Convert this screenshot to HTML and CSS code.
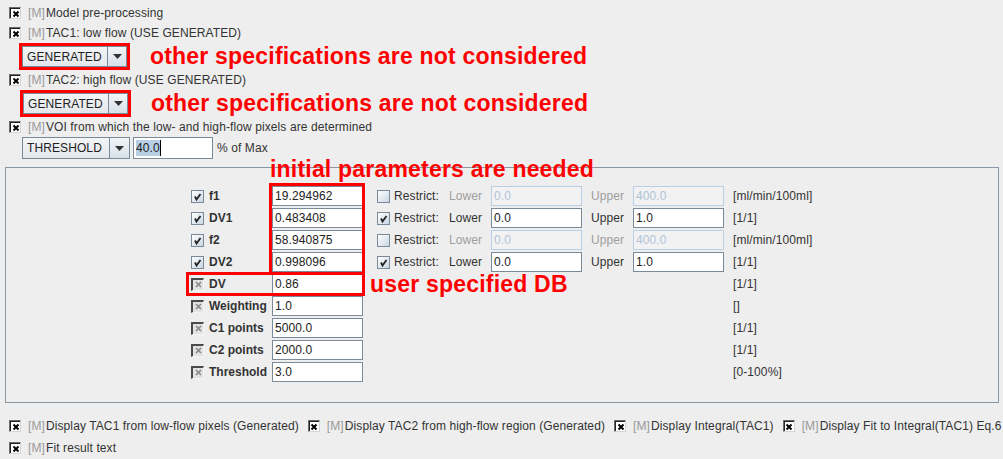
FILE: index.html
```html
<!DOCTYPE html>
<html>
<head>
<meta charset="utf-8">
<link rel="stylesheet" href="styles.css">
</head>
<body>
<div class="page">
  <div class="top">
    <div class="opt r1"><span class="cbx"><svg width="8" height="8" viewBox="0 0 8 8"><path d="M1.5 1.5L6.5 6.5M6.5 1.5L1.5 6.5" stroke="#000" stroke-width="2"/></svg></span><span class="m">[M]</span><span>Model pre-processing</span></div>
    <div class="opt"><span class="cbx"><svg width="8" height="8" viewBox="0 0 8 8"><path d="M1.5 1.5L6.5 6.5M6.5 1.5L1.5 6.5" stroke="#000" stroke-width="2"/></svg></span><span class="m">[M]</span><span>TAC1: low flow (USE GENERATED)</span></div>
    <div class="combo-row c1">
      <div class="redbox"><div class="combo"><span class="combo-text">GENERATED</span><span class="combo-btn"><svg width="9" height="5" viewBox="0 0 9 5"><path d="M0 0H9L4.5 5Z" fill="#333"/></svg></span></div></div>
      <span class="note">other specifications are not considered</span>
    </div>
    <div class="opt"><span class="cbx"><svg width="8" height="8" viewBox="0 0 8 8"><path d="M1.5 1.5L6.5 6.5M6.5 1.5L1.5 6.5" stroke="#000" stroke-width="2"/></svg></span><span class="m">[M]</span><span>TAC2: high flow (USE GENERATED)</span></div>
    <div class="combo-row c2">
      <div class="redbox"><div class="combo"><span class="combo-text">GENERATED</span><span class="combo-btn"><svg width="9" height="5" viewBox="0 0 9 5"><path d="M0 0H9L4.5 5Z" fill="#333"/></svg></span></div></div>
      <span class="note">other specifications are not considered</span>
    </div>
    <div class="opt"><span class="cbx"><svg width="8" height="8" viewBox="0 0 8 8"><path d="M1.5 1.5L6.5 6.5M6.5 1.5L1.5 6.5" stroke="#000" stroke-width="2"/></svg></span><span class="m">[M]</span><span>VOI from which the low- and high-flow pixels are determined</span></div>
    <div class="thr-row">
      <div class="combo wide"><span class="combo-text">THRESHOLD</span><span class="combo-btn"><svg width="9" height="5" viewBox="0 0 9 5"><path d="M0 0H9L4.5 5Z" fill="#333"/></svg></span></div>
      <div class="tfield"><span class="hl">40.0</span><span class="caret"></span></div>
      <span class="pct">% of Max</span>
    </div>
  </div>

  <div class="panel">
    <div class="prow">
      <span class="cbm"><svg width="11" height="11" viewBox="0 0 11 11"><path d="M3 5.5L4.5 8.5L8.5 3" stroke="#222" stroke-width="1.8" fill="none"/></svg></span>
      <span class="plabel">f1</span>
      <span class="fld">19.294962</span>
      <span class="cbm rcb"></span>
      <span class="rl">Restrict:</span>
      <span class="lw dis">Lower</span>
      <span class="fld dis lo">0.0</span>
      <span class="up dis">Upper</span>
      <span class="fld dis hi">400.0</span>
      <span class="unit">[ml/min/100ml]</span>
    </div>
    <div class="prow">
      <span class="cbm"><svg width="11" height="11" viewBox="0 0 11 11"><path d="M3 5.5L4.5 8.5L8.5 3" stroke="#222" stroke-width="1.8" fill="none"/></svg></span>
      <span class="plabel">DV1</span>
      <span class="fld">0.483408</span>
      <span class="cbm rcb"><svg width="11" height="11" viewBox="0 0 11 11"><path d="M3 5.5L4.5 8.5L8.5 3" stroke="#222" stroke-width="1.8" fill="none"/></svg></span>
      <span class="rl">Restrict:</span>
      <span class="lw">Lower</span>
      <span class="fld lo">0.0</span>
      <span class="up">Upper</span>
      <span class="fld hi">1.0</span>
      <span class="unit">[1/1]</span>
    </div>
    <div class="prow">
      <span class="cbm"><svg width="11" height="11" viewBox="0 0 11 11"><path d="M3 5.5L4.5 8.5L8.5 3" stroke="#222" stroke-width="1.8" fill="none"/></svg></span>
      <span class="plabel">f2</span>
      <span class="fld">58.940875</span>
      <span class="cbm rcb"></span>
      <span class="rl">Restrict:</span>
      <span class="lw dis">Lower</span>
      <span class="fld dis lo">0.0</span>
      <span class="up dis">Upper</span>
      <span class="fld dis hi">400.0</span>
      <span class="unit">[ml/min/100ml]</span>
    </div>
    <div class="prow">
      <span class="cbm"><svg width="11" height="11" viewBox="0 0 11 11"><path d="M3 5.5L4.5 8.5L8.5 3" stroke="#222" stroke-width="1.8" fill="none"/></svg></span>
      <span class="plabel">DV2</span>
      <span class="fld">0.998096</span>
      <span class="cbm rcb"><svg width="11" height="11" viewBox="0 0 11 11"><path d="M3 5.5L4.5 8.5L8.5 3" stroke="#222" stroke-width="1.8" fill="none"/></svg></span>
      <span class="rl">Restrict:</span>
      <span class="lw">Lower</span>
      <span class="fld lo">0.0</span>
      <span class="up">Upper</span>
      <span class="fld hi">1.0</span>
      <span class="unit">[1/1]</span>
    </div>
    <div class="prow">
      <span class="cbd"><svg width="7" height="7" viewBox="0 0 7 7"><path d="M1 1L6 6M6 1L1 6" stroke="#888" stroke-width="1.6"/></svg></span>
      <span class="plabel">DV</span>
      <span class="fld">0.86</span>
      <span class="unit">[1/1]</span>
    </div>
    <div class="prow">
      <span class="cbd"><svg width="7" height="7" viewBox="0 0 7 7"><path d="M1 1L6 6M6 1L1 6" stroke="#888" stroke-width="1.6"/></svg></span>
      <span class="plabel">Weighting</span>
      <span class="fld">1.0</span>
      <span class="unit">[]</span>
    </div>
    <div class="prow">
      <span class="cbd"><svg width="7" height="7" viewBox="0 0 7 7"><path d="M1 1L6 6M6 1L1 6" stroke="#888" stroke-width="1.6"/></svg></span>
      <span class="plabel">C1 points</span>
      <span class="fld">5000.0</span>
      <span class="unit">[1/1]</span>
    </div>
    <div class="prow">
      <span class="cbd"><svg width="7" height="7" viewBox="0 0 7 7"><path d="M1 1L6 6M6 1L1 6" stroke="#888" stroke-width="1.6"/></svg></span>
      <span class="plabel">C2 points</span>
      <span class="fld">2000.0</span>
      <span class="unit">[1/1]</span>
    </div>
    <div class="prow">
      <span class="cbd"><svg width="7" height="7" viewBox="0 0 7 7"><path d="M1 1L6 6M6 1L1 6" stroke="#888" stroke-width="1.6"/></svg></span>
      <span class="plabel">Threshold</span>
      <span class="fld">3.0</span>
      <span class="unit">[0-100%]</span>
    </div>
  </div>

  <div class="bottom">
    <div class="brow">
      <div class="opt"><span class="cbx"><svg width="8" height="8" viewBox="0 0 8 8"><path d="M1.5 1.5L6.5 6.5M6.5 1.5L1.5 6.5" stroke="#000" stroke-width="2"/></svg></span><span class="m">[M]</span><span>Display TAC1 from low-flow pixels (Generated)</span></div>
      <div class="opt"><span class="cbx"><svg width="8" height="8" viewBox="0 0 8 8"><path d="M1.5 1.5L6.5 6.5M6.5 1.5L1.5 6.5" stroke="#000" stroke-width="2"/></svg></span><span class="m">[M]</span><span>Display TAC2 from high-flow region (Generated)</span></div>
      <div class="opt"><span class="cbx"><svg width="8" height="8" viewBox="0 0 8 8"><path d="M1.5 1.5L6.5 6.5M6.5 1.5L1.5 6.5" stroke="#000" stroke-width="2"/></svg></span><span class="m">[M]</span><span>Display Integral(TAC1)</span></div>
      <div class="opt"><span class="cbx"><svg width="8" height="8" viewBox="0 0 8 8"><path d="M1.5 1.5L6.5 6.5M6.5 1.5L1.5 6.5" stroke="#000" stroke-width="2"/></svg></span><span class="m">[M]</span><span>Display Fit to Integral(TAC1) Eq.6</span></div>
    </div>
    <div class="brow">
      <div class="opt"><span class="cbx"><svg width="8" height="8" viewBox="0 0 8 8"><path d="M1.5 1.5L6.5 6.5M6.5 1.5L1.5 6.5" stroke="#000" stroke-width="2"/></svg></span><span class="m">[M]</span><span>Fit result text</span></div>
    </div>
  </div>

  <div class="rbox rb1"></div>
  <div class="rbox rb2"></div>
  <div class="note abs n-init">initial parameters are needed</div>
  <div class="note abs n-user">user specified DB</div>
</div>
</body>
</html>
```

FILE: styles.css
```css
html, body {
  margin: 0;
  padding: 0;
}
body {
  background: #eeeeee;
  font-family: "Liberation Sans", Arial, sans-serif;
  font-size: 12px;
  letter-spacing: 0.1px;
  color: #333333;
}
.page {
  position: relative;
  width: 1003px;
  height: 459px;
  overflow: hidden;
}
.top {
  padding-left: 9px;
  padding-top: 3px;
}
.opt {
  display: flex;
  align-items: center;
  height: 20px;
  white-space: nowrap;
}
.cbx {
  flex: none;
  width: 12px;
  height: 12px;
  box-sizing: border-box;
  border: 1px solid;
  border-color: #6a6a6a #d4d4d4 #d4d4d4 #6a6a6a;
  box-shadow: inset 1px 1px 0 #222;
  background: #ffffff;
  display: flex;
  align-items: center;
  justify-content: center;
  margin-right: 7px;
}
.cbx svg {
  margin: 1px 0 0 1px;
}
.m {
  color: #9a9a9a;
  margin-right: 1px;
}
.combo-row {
  display: flex;
  align-items: center;
  height: 27px;
}
.combo-row.c1 {
  margin-left: 10px;
}
.combo-row.c2 {
  margin-left: 11px;
}
.redbox {
  border: 3px solid #ff0000;
  display: flex;
}
.combo {
  display: flex;
  width: 105px;
  height: 21px;
  box-sizing: border-box;
  border: 1px solid #7a8a99;
  background: linear-gradient(#f3f5f7, #e3e7eb);
}
.combo.wide {
  width: 108px;
  height: 22px;
}
.combo-text {
  flex: 1;
  display: flex;
  align-items: center;
  padding-left: 4px;
  color: #222;
}
.combo-btn {
  flex: none;
  width: 18px;
  border-left: 1px solid #7a8a99;
  display: flex;
  align-items: center;
  justify-content: center;
  background: linear-gradient(#f2f5f8, #d7e0e9);
}
.combo.wide .combo-btn {
  width: 19px;
}
.note {
  color: #ff0000;
  font-weight: bold;
  font-size: 23px;
  letter-spacing: 0.2px;
  white-space: nowrap;
  margin-left: 20px;
}
.thr-row {
  display: flex;
  align-items: center;
  height: 22px;
  margin-left: 13px;
}
.tfield {
  margin-left: 3px;
  width: 80px;
  height: 22px;
  box-sizing: border-box;
  border: 1px solid #7a8a99;
  background: #fff;
  display: flex;
  align-items: center;
  padding-left: 2px;
}
.hl {
  background: #b8cfe5;
  color: #222;
  line-height: 16px;
}
.caret {
  width: 1px;
  height: 16px;
  background: #000;
}
.pct {
  margin-left: 4px;
}
.panel {
  margin: 8px 4px 0 5px;
  border: 1px solid #8a96a2;
  padding: 17px 0 0 185px;
  box-sizing: content-box;
  height: 217px;
}
.prow {
  display: grid;
  grid-template-columns: 18px 63px 91px 14px 17px 55px 42px 91px 9px 42px 91px 9px auto;
  align-items: center;
  height: 22px;
  white-space: nowrap;
}
.cbm {
  grid-column: 1;
  width: 13px;
  height: 13px;
  box-sizing: border-box;
  border: 1px solid #7a8a99;
  background: linear-gradient(135deg, #ffffff, #c8d6e4);
  display: flex;
  align-items: center;
  justify-content: center;
}
.cbm.rcb {
  grid-column: 5;
}
.cbd {
  grid-column: 1;
  width: 13px;
  height: 13px;
  box-sizing: border-box;
  border-style: solid;
  border-width: 2px 1px 1px 2px;
  border-color: #4a4a4a #f4f4f4 #f4f4f4 #4a4a4a;
  background: #e2e2e2;
  display: flex;
  align-items: center;
  justify-content: center;
}
.plabel {
  grid-column: 2;
  font-weight: bold;
  letter-spacing: 0;
  color: #333;
}
.fld {
  grid-column: 3;
  height: 20px;
  box-sizing: border-box;
  border: 1px solid #7a8a99;
  background: #ffffff;
  padding-left: 2px;
  line-height: 18px;
  color: #222;
}
.fld.lo {
  grid-column: 8;
}
.fld.hi {
  grid-column: 11;
}
.fld.dis {
  border-color: #b8cfe5;
  color: #b0c4d8;
  background: #f2f2f2;
}
.rl {
  grid-column: 6;
}
.lw {
  grid-column: 7;
}
.up {
  grid-column: 10;
}
.lw.dis, .up.dis {
  color: #9e9e9e;
}
.unit {
  grid-column: 13;
}
.bottom {
  margin-top: 12px;
  padding-left: 9px;
}
.brow {
  display: flex;
  gap: 9px;
  height: 22px;
  align-items: center;
}
.rbox {
  position: absolute;
  border: 3px solid #ff0000;
  box-sizing: border-box;
}
.rb1 {
  left: 269px;
  top: 183px;
  width: 96px;
  height: 92px;
}
.rb2 {
  left: 186px;
  top: 272px;
  width: 179px;
  height: 24px;
}
.note.abs {
  position: absolute;
  margin: 0;
  line-height: 23px;
}
.n-init {
  left: 270px;
  top: 158px;
}
.n-user {
  left: 370px;
  top: 273px;
}
```
